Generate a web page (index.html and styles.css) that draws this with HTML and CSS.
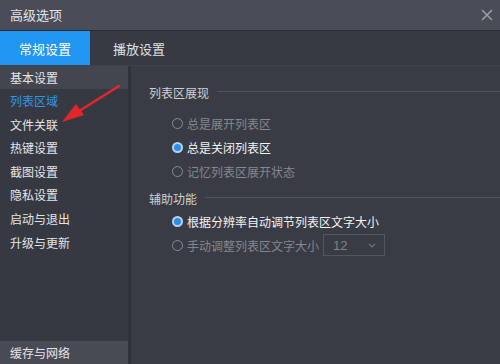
FILE: index.html
```html
<!DOCTYPE html>
<html lang="zh-CN">
<head>
<meta charset="utf-8">
<title>高级选项</title>
<link rel="stylesheet" href="styles.css">
</head>
<body>
<div class="window">
  <div class="titlebar">
    <span class="title">高级选项</span>
    <svg class="close" width="12" height="12" viewBox="0 0 12 12"><path d="M1 1L11 11M11 1L1 11" stroke="#9a9ca2" stroke-width="1.6" fill="none"/></svg>
  </div>
  <div class="tabs">
    <div class="tab active">常规设置</div>
    <div class="tab second">播放设置</div>
  </div>
  <div class="main">
    <div class="sidebar">
      <div class="item selected">基本设置</div>
      <div class="item link">列表区域</div>
      <div class="item">文件关联</div>
      <div class="item">热键设置</div>
      <div class="item">截图设置</div>
      <div class="item">隐私设置</div>
      <div class="item">启动与退出</div>
      <div class="item">升级与更新</div>
      <div class="item bottom">缓存与网络</div>
    </div>
    <div class="content">
      <div class="heading first"><span>列表区展现</span><i class="rule"></i></div>
      <div class="radios">
        <div class="radio disabled"><span class="dot"></span>总是展开列表区</div>
        <div class="radio checked"><span class="dot"></span>总是关闭列表区</div>
        <div class="radio disabled"><span class="dot"></span>记忆列表区展开状态</div>
      </div>
      <div class="heading second"><span>辅助功能</span><i class="rule"></i></div>
      <div class="radios">
        <div class="radio checked"><span class="dot"></span>根据分辨率自动调节列表区文字大小</div>
        <div class="radio disabled"><span class="dot"></span>手动调整列表区文字大小
          <div class="select"><span>12</span><svg width="8" height="5" viewBox="0 0 8 5"><path d="M1 1L4 4L7 1" stroke="#6f7278" stroke-width="1.2" fill="none"/></svg></div>
        </div>
      </div>
    </div>
  </div>
  <svg class="arrow" width="500" height="364" viewBox="0 0 500 364">
    <line x1="119" y1="86" x2="76" y2="113" stroke="#e3262b" stroke-width="2.6" stroke-linecap="round"/>
    <polygon points="62,122 84,115 76,104" fill="#e3262b"/>
  </svg>
</div>
</body>
</html>
```
FILE: styles.css
```css
* { box-sizing: border-box; margin: 0; padding: 0; }
html, body { width: 500px; height: 364px; overflow: hidden; background: #393c45; }
body { font-family: "Noto Sans CJK SC", "Noto Sans", sans-serif; font-size: 12px; color: #d6d7da; }
.window { position: relative; width: 500px; height: 364px; display: flex; flex-direction: column; }
.titlebar { height: 31px; background: #4a4d57; border-bottom: 1px solid #2a2c32; display: flex; align-items: center; justify-content: space-between; padding: 0 7px 1px 10px; }
.title { font-size: 13px; color: #e2e3e6; }
.close { display: block; }
.tabs { height: 34px; background: #373a43; display: flex; align-items: stretch; }
.tab { font-size: 13px; color: #dfe0e3; display: flex; align-items: center; }
.tab.active { width: 90px; justify-content: center; background: #2196f3; color: #ffffff; }
.tab.second { padding-left: 23px; }
.main { flex: 1; display: flex; border-top: 1px solid #3f424b; min-height: 0; }
.sidebar { width: 131px; background: #363942; border-right: 3px solid #30323a; display: flex; flex-direction: column; }
.item { height: 23.6px; line-height: 23.6px; padding-left: 10px; font-size: 12px; color: #e4e5e8; }
.item.selected { background: #43464f; height: 23px; line-height: 23px; }
.item.link { color: #2f97e6; }
.item.bottom { margin-top: auto; background: #484b54; height: 23px; line-height: 23px; }
.content { flex: 1; padding: 16px 0 0 18px; }
.heading { height: 20px; display: flex; align-items: center; color: #cfd0d4; font-size: 12px; }
.heading .rule { flex: 1; height: 1px; background: #50535c; margin-left: 8px; margin-top: -2px; }
.heading.first { margin-bottom: 9px; }
.heading.second { margin-top: 5px; margin-bottom: 1px; }
.radios { padding-left: 23px; }
.radio { height: 24px; display: flex; align-items: center; font-size: 12px; color: #f2f3f5; }
.radio.disabled { color: #85878d; }
.dot { width: 11px; height: 11px; border-radius: 50%; border: 1.5px solid #8a8c92; margin-right: 4px; flex: none; }
.radio.checked .dot { border: 2px solid #b6d4ef; background: #2a8fe8; box-shadow: inset 0 0 0 1px #2a8fe8; }
.select { margin-left: 4px; width: 62px; height: 22px; border: 1px solid #53565d; display: flex; align-items: center; justify-content: space-between; padding: 0 8px 0 9px; color: #7f8187; font-size: 13px; font-family: "Liberation Sans", sans-serif; }
.select svg { display: block; }
.arrow { position: absolute; left: 0; top: 0; pointer-events: none; }
```
